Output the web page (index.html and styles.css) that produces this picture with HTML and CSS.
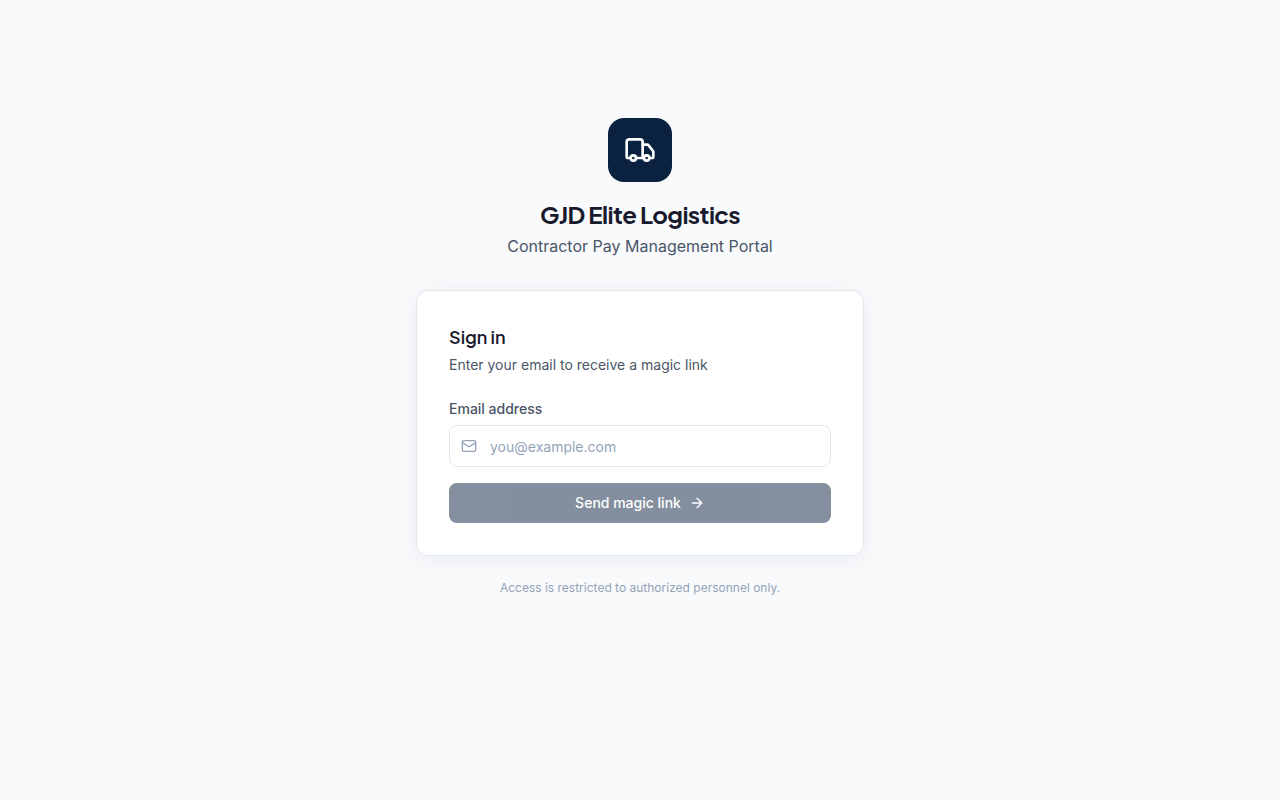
FILE: index.html
```html
<!DOCTYPE html>
<html lang="en">
<head>
    <meta charset="UTF-8">
    <meta name="viewport" content="width=device-width, initial-scale=1.0">
    <title>GJD Elite Logistics - Sign in</title>
    <link rel="stylesheet" href="styles.css">
</head>
<body>
    <main class="login">
        <header class="brand">
            <div class="brand-logo">
                <svg class="icon-truck" viewBox="0 0 24 24" aria-hidden="true">
                    <path d="M14 18V6a2 2 0 0 0-2-2H4a2 2 0 0 0-2 2v11a1 1 0 0 0 1 1h2"/>
                    <path d="M15 18H9"/>
                    <path d="M19 18h2a1 1 0 0 0 1-1v-3.65a1 1 0 0 0-.22-.624l-3.48-4.35A1 1 0 0 0 17.52 8H14"/>
                    <circle cx="17" cy="18" r="2"/>
                    <circle cx="7" cy="18" r="2"/>
                </svg>
            </div>
            <h1>GJD Elite Logistics</h1>
            <p>Contractor Pay Management Portal</p>
        </header>

        <section class="card">
            <h2>Sign in</h2>
            <p class="card-intro">Enter your email to receive a magic link</p>

            <form id="loginForm">
                <label for="email">Email address</label>
                <div class="input-wrap">
                    <svg class="icon-mail" viewBox="0 0 24 24" aria-hidden="true">
                        <rect width="20" height="16" x="2" y="4" rx="2"/>
                        <path d="m22 7-8.97 5.7a1.94 1.94 0 0 1-2.06 0L2 7"/>
                    </svg>
                    <input type="email" id="email" name="email" placeholder="you@example.com" autocomplete="email" required>
                </div>
                <button type="submit" class="button" id="sendButton" disabled>
                    Send magic link
                    <svg class="icon-arrow" viewBox="0 0 24 24" aria-hidden="true">
                        <path d="M5 12h14"/>
                        <path d="m12 5 7 7-7 7"/>
                    </svg>
                </button>
            </form>
        </section>

        <p class="footnote">Access is restricted to authorized personnel only.</p>
    </main>

    <script>
        const emailInput = document.getElementById('email');
        const sendButton = document.getElementById('sendButton');

        // Enable the button once an email has been typed
        emailInput.addEventListener('input', () => {
            sendButton.disabled = emailInput.value.trim() === '';
        });

        document.getElementById('loginForm').addEventListener('submit', (e) => {
            e.preventDefault();
        });
    </script>
</body>
</html>
```
FILE: styles.css
```css
* {
    box-sizing: border-box;
}

body {
    margin: 0;
    min-height: 100vh;
    padding: 16px 16px 102px;
    display: flex;
    align-items: center;
    justify-content: center;
    background: #f8fafc;
    color: #1a1a2e;
    font-family: Inter, "Liberation Sans", sans-serif;
    font-size: 14px;
    line-height: 20px;
}

h1,
h2,
p {
    margin: 0;
}

svg {
    fill: none;
    stroke: currentColor;
    stroke-width: 2;
    stroke-linecap: round;
    stroke-linejoin: round;
}

.login {
    width: 100%;
    max-width: 448px;
}

.brand {
    margin-bottom: 32px;
    text-align: center;
}

.brand-logo {
    display: flex;
    align-items: center;
    justify-content: center;
    width: 64px;
    height: 64px;
    margin: 0 auto 16px;
    border-radius: 16px;
    background: #0a2240;
    color: #fff;
}

.icon-truck {
    width: 32px;
    height: 32px;
}

h1,
h2 {
    margin-bottom: 4px;
    font-family: "Plus Jakarta Sans", Inter, sans-serif;
}

.brand h1 {
    font-size: 24px;
    line-height: 32px;
    font-weight: 700;
    letter-spacing: -0.025em;
}

.brand p {
    font-size: 16px;
    line-height: 24px;
    color: #4a5568;
}

.card {
    padding: 32px;
    border: 1px solid #e2e8f0;
    border-radius: 12px;
    background: #fff;
    box-shadow: 0 4px 24px rgba(10, 34, 64, 0.06);
}

.card h2 {
    font-size: 18px;
    line-height: 28px;
    font-weight: 600;
}

.card-intro {
    margin-bottom: 24px;
    color: #4a5568;
}

label {
    display: block;
    margin-bottom: 6px;
    font-weight: 500;
    color: #4a5568;
}

.input-wrap {
    position: relative;
    margin-bottom: 16px;
}

.icon-mail {
    position: absolute;
    top: 13px;
    left: 12px;
    width: 16px;
    height: 16px;
    color: #94a3b8;
}

input {
    display: block;
    width: 100%;
    height: 42px;
    padding: 10px 12px 10px 40px;
    border: 1px solid #e2e8f0;
    border-radius: 8px;
    background: #fff;
    color: #1a1a2e;
    font: inherit;
}

input::placeholder {
    color: #94a3b8;
}

.button {
    display: flex;
    align-items: center;
    justify-content: center;
    gap: 8px;
    width: 100%;
    height: 40px;
    border: none;
    border-radius: 8px;
    background: #0a2240;
    color: #fff;
    font: inherit;
    font-weight: 500;
    cursor: pointer;
}

.button:disabled {
    opacity: 0.5;
    cursor: not-allowed;
}

.icon-arrow {
    width: 16px;
    height: 16px;
}

.footnote {
    margin-top: 24px;
    font-size: 12px;
    line-height: 16px;
    text-align: center;
    color: #94a3b8;
}
```
